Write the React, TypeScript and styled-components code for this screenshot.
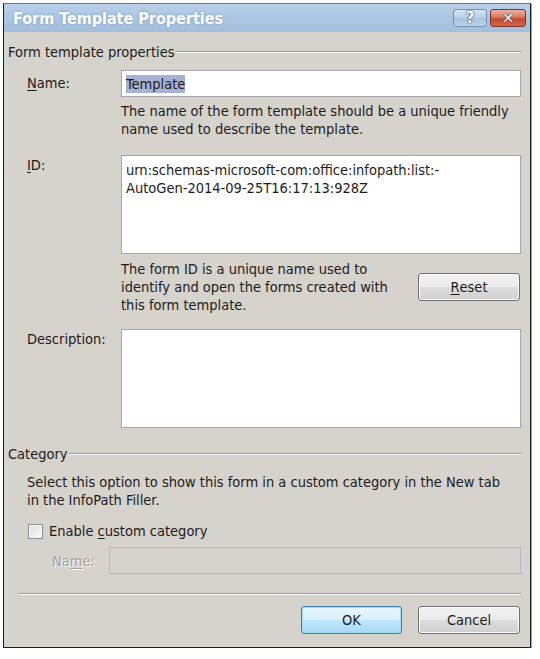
import React from 'react';
import styled, { createGlobalStyle, css } from 'styled-components';

const GlobalStyle = createGlobalStyle`
  html, body {
    margin: 0;
    padding: 0;
    background: #ffffff;
  }
  body {
    font-family: "DejaVu Sans Condensed", "DejaVu Sans", sans-serif;
    font-size: 14.5px;
    color: #1c1c1c;
  }
`;

const Frame = styled.div`
  box-sizing: border-box;
  margin: 3px 0 0 3px;
  width: 528px;
  height: 645px;
  border: 1px solid #1e1e1e;
  border-top-color: #6c7a88;
  box-shadow: 1px 1px 0 #3fc3e6;
  background: #d6d2cc;
  display: flex;
  flex-direction: column;
`;

const TitleBar = styled.div`
  height: 28px;
  display: flex;
  align-items: center;
  padding: 0 4px 0 9px;
  background: linear-gradient(#b8d0ea, #a1bedc);
`;

const Title = styled.div`
  flex: 1;
  font-family: "DejaVu Sans Condensed", "DejaVu Sans", sans-serif;
  font-weight: bold;
  font-size: 16px;
  color: #ffffff;
  text-shadow: 0 0 3px rgba(120, 150, 190, 0.9);
`;

const CaptionButton = styled.div<{ $close?: boolean }>`
  box-sizing: border-box;
  height: 18px;
  width: ${p => (p.$close ? 36 : 34)}px;
  margin-left: 3px;
  border-radius: 3px;
  display: flex;
  align-items: center;
  justify-content: center;
  font-family: "DejaVu Sans", sans-serif;
  font-weight: bold;
  font-size: ${p => (p.$close ? 14 : 15)}px;
  color: #ffffff;
  ${p =>
    p.$close
      ? css`
          border: 1px solid #7e3425;
          background: linear-gradient(#eab2a2 0%, #d9785f 45%, #c24a2f 55%, #d8674a 100%);
        `
      : css`
          border: 1px solid #7590b4;
          background: linear-gradient(#d6e4f2 0%, #bcd1e8 45%, #a8c2df 55%, #bcd3ea 100%);
        `}
  text-shadow: 0 0 2px #30425c, 0 0 1px #30425c;
`;

const Body = styled.div`
  flex: 1;
  display: flex;
  flex-direction: column;
  padding: 11px 9px 0 4px;
`;

const GroupHeader = styled.div<{ $gap: number }>`
  display: flex;
  align-items: center;
  height: 18px;
  margin-top: ${p => p.$gap}px;
  line-height: 18px;
  &::after {
    content: '';
    flex: 1;
    height: 1px;
    margin-left: 1px;
    background: #9a9894;
    border-bottom: 1px solid #ffffff;
  }
`;

const FieldRow = styled.div<{ $gap: number }>`
  display: grid;
  grid-template-columns: 94px 1fr;
  padding-left: 19px;
  margin-top: ${p => p.$gap}px;
`;

const Label = styled.div<{ $top: number }>`
  line-height: 18px;
  padding-top: ${p => p.$top}px;
`;

const Key = styled.span`
  text-decoration: underline;
  text-underline-offset: 2px;
`;

const TextBox = styled.div<{ $height: number; $disabled?: boolean }>`
  box-sizing: border-box;
  height: ${p => p.$height}px;
  border: 1px solid ${p => (p.$disabled ? '#b3b9cf' : '#a7a7a7')};
  background: ${p => (p.$disabled ? '#d6d2cc' : '#ffffff')};
  padding: ${p => (p.$height > 40 ? '5px 4px' : '4px 4px')};
  line-height: 18px;
  overflow: hidden;
`;

const Selected = styled.span`
  background: #a5b2d2;
  padding: 1px 0;
`;

const Help = styled.div<{ $gap: number }>`
  grid-column: 2;
  margin-top: ${p => p.$gap}px;
  line-height: 18px;
`;

const HelpWithButton = styled.div`
  grid-column: 2;
  display: flex;
  justify-content: space-between;
  align-items: flex-start;
  padding-right: 1px;
  line-height: 18px;
`;

const Button = styled.div<{ $default?: boolean; $top?: number }>`
  box-sizing: border-box;
  width: ${p => (p.$default ? 101 : 102)}px;
  height: 28px;
  margin-top: ${p => p.$top ?? 0}px;
  border-radius: 3px;
  display: flex;
  align-items: center;
  justify-content: center;
  color: #1c1c1c;
  ${p =>
    p.$default
      ? css`
          border: 1px solid #3c7fb1;
          background: linear-gradient(#eaf6fd 0%, #d9f0fc 48%, #bee6fd 52%, #a7d9f5 100%);
          box-shadow: inset 0 0 0 1px #9fe0f8;
        `
      : css`
          border: 1px solid #707070;
          background: linear-gradient(#f2f2f2 0%, #ebebeb 48%, #dddddd 52%, #cfcfcf 100%);
          box-shadow: inset 0 0 0 1px #fbfbfb;
        `}
`;

const Indented = styled.div<{ $gap: number }>`
  padding-left: 19px;
  margin-top: ${p => p.$gap}px;
  line-height: 18px;
`;

const CheckRow = styled.label`
  display: flex;
  align-items: center;
  gap: 6px;
  line-height: 18px;
`;

const CheckBox = styled.span`
  box-sizing: border-box;
  width: 15px;
  height: 15px;
  margin-left: 1px;
  border: 1px solid #8f8f8f;
  background: linear-gradient(135deg, #dcdcdc, #fbfbfb);
  box-shadow: inset 0 0 0 1px #f4f4f4;
`;

const SubRow = styled.div<{ $gap: number }>`
  display: grid;
  grid-template-columns: 57px 1fr;
  align-items: center;
  padding-left: 44px;
  margin-top: ${p => p.$gap}px;
`;

const DisabledLabel = styled.div`
  color: #a4a19b;
  text-shadow: 1px 1px 0 #ffffff;
`;

const Separator = styled.div`
  margin: 19px 0 0 11px;
  height: 1px;
  background: #9a9894;
  border-bottom: 1px solid #ffffff;
`;

const Buttons = styled.div`
  display: flex;
  justify-content: flex-end;
  gap: 16px;
  margin-top: 11px;
  padding-right: 1px;
`;

const App = () => (
  <>
    <GlobalStyle />
    <Frame>
      <TitleBar>
        <Title>Form Template Properties</Title>
        <CaptionButton>?</CaptionButton>
        <CaptionButton $close>✕</CaptionButton>
      </TitleBar>
      <Body>
        <GroupHeader $gap={0}>Form template properties</GroupHeader>

        <FieldRow $gap={9}>
          <Label $top={4}>
            <Key>N</Key>ame:
          </Label>
          <TextBox $height={27}>
            <Selected>Template</Selected>
          </TextBox>
          <Help $gap={5}>
            The name of the form template should be a unique friendly
            <br />
            name used to describe the template.
          </Help>
        </FieldRow>

        <FieldRow $gap={17}>
          <Label $top={1}>
            <Key>I</Key>D:
          </Label>
          <TextBox $height={99}>
            urn:schemas-microsoft-com:office:infopath:list:-
            <br />
            AutoGen-2014-09-25T16:17:13:928Z
          </TextBox>
        </FieldRow>

        <FieldRow $gap={6}>
          <HelpWithButton>
            <div>
              The form ID is a unique name used to
              <br />
              identify and open the forms created with
              <br />
              this form template.
            </div>
            <Button $top={13}>
              <Key>R</Key>eset
            </Button>
          </HelpWithButton>
        </FieldRow>

        <FieldRow $gap={15}>
          <Label $top={1}>Description:</Label>
          <TextBox $height={99} />
        </FieldRow>

        <GroupHeader $gap={17}>Category</GroupHeader>
        <Indented $gap={10}>
          Select this option to show this form in a custom category in the New tab
          <br />
          in the InfoPath Filler.
        </Indented>
        <Indented $gap={13}>
          <CheckRow>
            <CheckBox />
            <span>
              Enable <Key>c</Key>ustom category
            </span>
          </CheckRow>
        </Indented>
        <SubRow $gap={7}>
          <DisabledLabel>
            Na<Key>m</Key>e:
          </DisabledLabel>
          <TextBox $height={27} $disabled />
        </SubRow>

        <Separator />
        <Buttons>
          <Button $default>OK</Button>
          <Button>Cancel</Button>
        </Buttons>
      </Body>
    </Frame>
  </>
);

export default App;
